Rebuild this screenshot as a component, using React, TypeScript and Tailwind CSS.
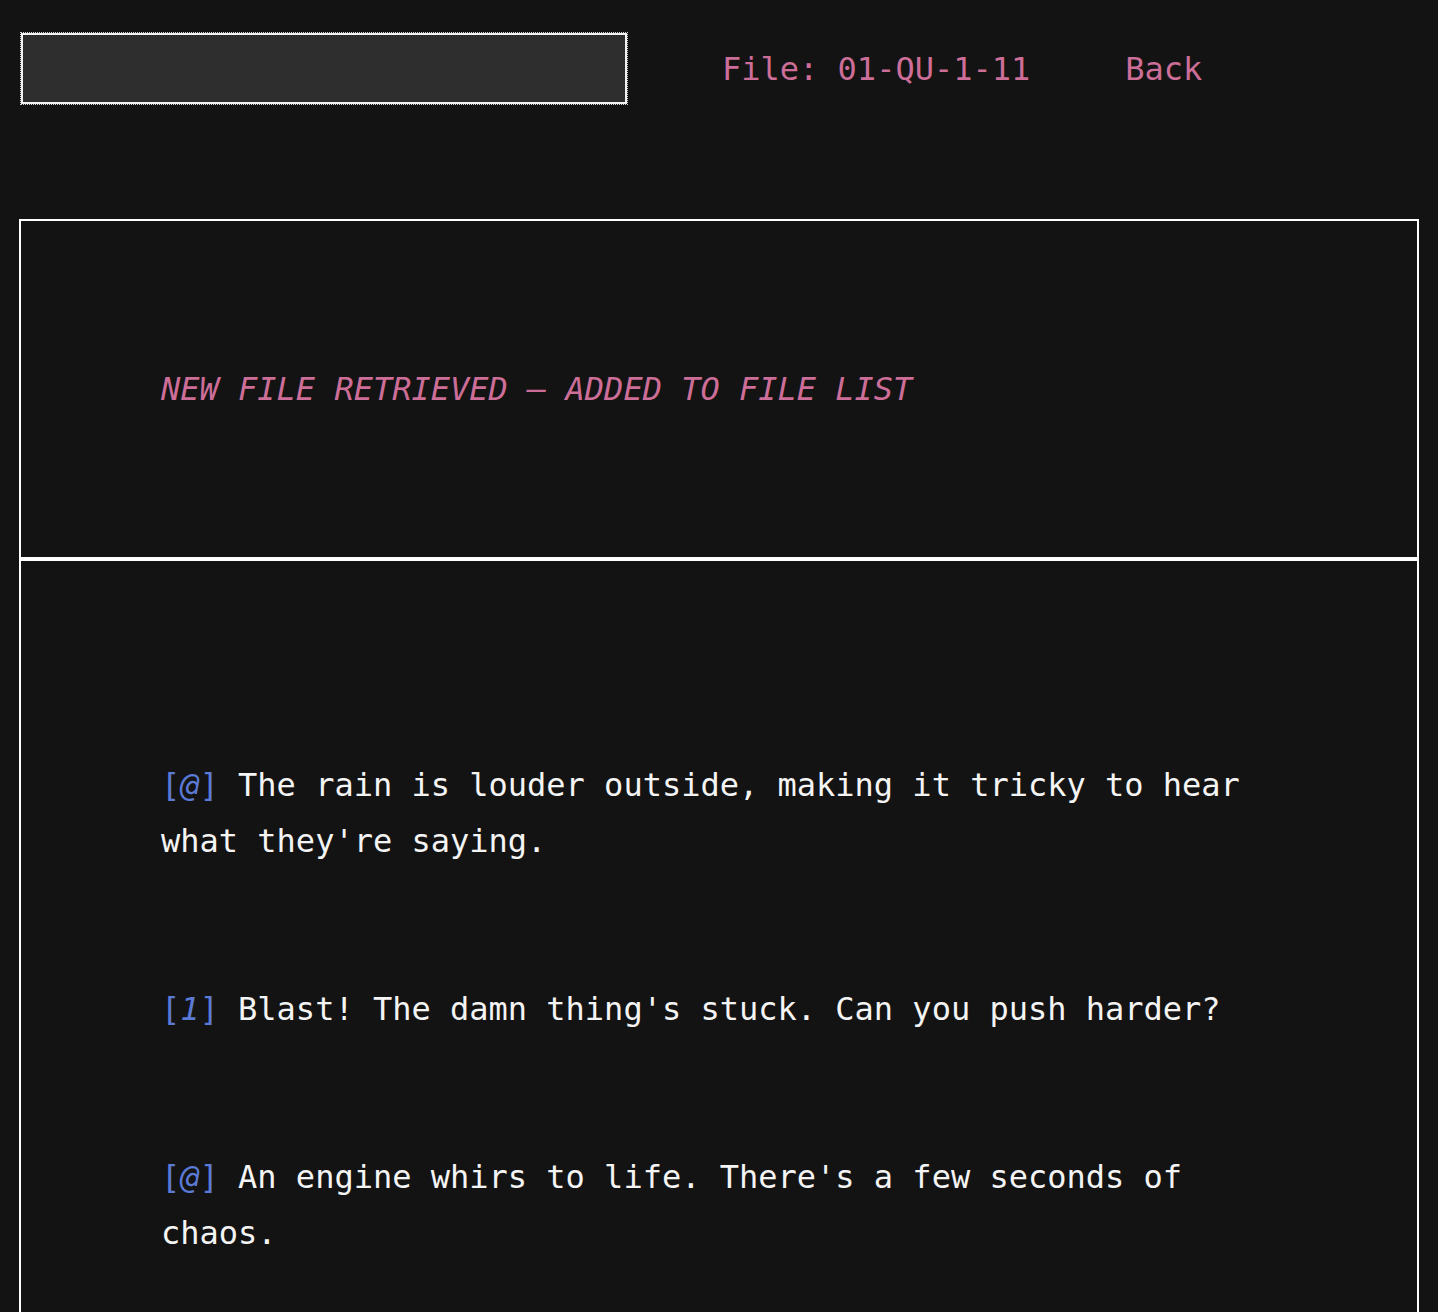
export default function App() {
  const mono = { fontFamily: '"DejaVu Sans Mono", "Liberation Mono", monospace' };
  const lines: { tag: string; text: string }[] = [
    { tag: "@", text: "The rain is louder outside, making it tricky to hear what they're saying." },
    { tag: "1", text: "Blast! The damn thing's stuck. Can you push harder?" },
    { tag: "@", text: "An engine whirs to life. There's a few seconds of chaos." },
  ];
  return (
    <div className="min-h-screen bg-[#131313] px-[19px] pt-[32px] text-[32px] leading-[56px]" style={mono}>
      <div className="flex items-center h-[73px]">
        <div className="ml-[1px] w-[608px] h-[73px] border border-dotted border-[#d0d0d0]">
          <div className="w-full h-full border-2 border-[#f2f2f2] bg-[#2e2e2e]" />
        </div>
        <a className="ml-[94px] text-[#cc6e97]">File: 01-QU-1-11</a>
        <a className="ml-[95px] text-[#cc6e97]">Back</a>
      </div>
      <div className="mt-[114px] border-2 border-white p-[140px]">
        <div className="italic text-[#cc6e97]">NEW FILE RETRIEVED – ADDED TO FILE LIST</div>
      </div>
      <div className="border-2 border-white px-[140px] pt-[196px] pb-[140px] flex flex-col gap-[112px] text-[#f4f4f4]">
        {lines.map((l, i) => (
          <p key={i}>
            <span className="text-[#5b7ad6]">
              [<span className="italic">{l.tag}</span>]
            </span>{" "}
            {l.text}
          </p>
        ))}
      </div>
    </div>
  );
}
